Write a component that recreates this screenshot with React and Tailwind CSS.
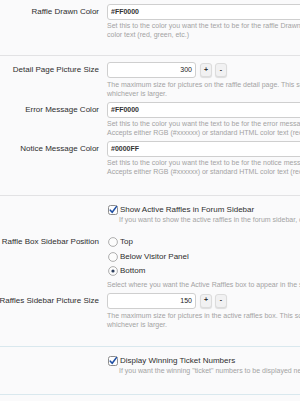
import React from 'react';

const FONT = "font-['Liberation_Sans',Arial,sans-serif]";

function Label({ children, className = '' }) {
  return (
    <div className={`w-[99px] shrink-0 flex justify-end whitespace-nowrap text-[8px] text-[#2e2e2e] ${className}`}>
      {children}
    </div>
  );
}

function Hint({ lines, className = 'mt-[1px]' }) {
  return (
    <div className={`text-[7px] leading-[9px] text-[#a3a3a3] whitespace-nowrap ${className}`}>
      {lines.map((l) => (
        <div key={l}>{l}</div>
      ))}
    </div>
  );
}

function TextRow({ label, value, hint, className = '' }) {
  return (
    <div className={`flex ${className}`}>
      <Label className="h-[16px] leading-[16px]">{label}</Label>
      <div className="ml-[8px] flex-1 min-w-0">
        <div className="h-[16px] w-[220px] rounded-[3px] border border-[#cfcfcf] bg-white pl-[3px] text-[7px] font-bold leading-[14px] text-[#333]">
          {value}
        </div>
        <Hint lines={hint} />
      </div>
    </div>
  );
}

function SpinRow({ label, value, hint, className = '' }) {
  return (
    <div className={`flex ${className}`}>
      <Label className="h-[16px] leading-[16px]">{label}</Label>
      <div className="ml-[8px] flex-1 min-w-0">
        <div className="flex items-center h-[16px]">
          <div className="h-[16px] w-[89px] rounded-[3px] border border-[#cfcfcf] bg-white pr-[3px] text-right text-[7px] leading-[14px] text-[#222]">
            {value}
          </div>
          <div className="ml-[4px] flex h-[14px] w-[12px] items-center justify-center rounded-[3px] border border-[#dcdcdc] bg-[#f1f1f2] text-[7px] font-bold text-[#333] shadow-[0_1px_1px_rgba(0,0,0,0.12)]">
            +
          </div>
          <div className="ml-[3px] flex h-[14px] w-[12px] items-center justify-center rounded-[3px] border border-[#dcdcdc] bg-[#f1f1f2] text-[7px] font-bold text-[#333] shadow-[0_1px_1px_rgba(0,0,0,0.12)]">
            -
          </div>
        </div>
        <Hint lines={hint} className="mt-[2px]" />
      </div>
    </div>
  );
}

function Checkbox() {
  return (
    <svg width="10" height="10" viewBox="0 0 10 10" className="shrink-0">
      <rect x="0.5" y="0.5" width="9" height="9" rx="2" fill="#fdfdfd" stroke="#8c8c8c" />
      <path d="M2.3 5.2 L4.2 7.3 L8.4 1.6" fill="none" stroke="#1f4fa3" strokeWidth="1.6" strokeLinecap="round" strokeLinejoin="round" />
    </svg>
  );
}

function Radio({ checked }) {
  return (
    <svg width="10" height="10" viewBox="0 0 10 10" className="shrink-0">
      <circle cx="5" cy="5" r="4.4" fill="#fcfcfc" stroke="#9a9a9a" strokeWidth="0.8" />
      {checked && <circle cx="5" cy="5" r="1.6" fill="#2d3f5e" />}
    </svg>
  );
}

function CheckRow({ text, hint, className = '' }) {
  return (
    <div className={`flex ${className}`}>
      <div className="w-[99px] shrink-0" />
      <div className="ml-[8px] flex-1 min-w-0">
        <div className="flex items-center h-[10px] gap-[2px] pl-[1px] whitespace-nowrap text-[8px] text-[#2e2e2e]">
          <Checkbox />
          <span>{text}</span>
        </div>
        <Hint lines={[hint]} className="ml-[12px]" />
      </div>
    </div>
  );
}

export default function App() {
  const radios = [
    { label: 'Top', checked: false },
    { label: 'Below Visitor Panel', checked: false },
    { label: 'Bottom', checked: true },
  ];

  return (
    <div className={`w-[300px] h-[401px] overflow-hidden bg-[#fafafb] ${FONT}`}>
      <div className="pt-[4px] pb-[16px] border-b border-[#e2e2e4]">
        <TextRow
          label="Raffle Drawn Color"
          value="#FF0000"
          hint={[
            'Set this to the color you want the text to be for the raffle Drawn',
            'color text (red, green, etc.)',
          ]}
        />
      </div>

      <div className="pt-[6px] pb-[19px] border-b border-[#e2e2e4]">
        <SpinRow
          label="Detail Page Picture Size"
          value="300"
          hint={[
            'The maximum size for pictures on the raffle detail page. This scale',
            'whichever is larger.',
          ]}
        />
        <TextRow
          className="mt-[4px]"
          label="Error Message Color"
          value="#FF0000"
          hint={[
            'Set this to the color you want the text to be for the error message',
            'Accepts either RGB (#xxxxxx) or standard HTML color text (red, green',
          ]}
        />
        <TextRow
          className="mt-[4px]"
          label="Notice Message Color"
          value="#0000FF"
          hint={[
            'Set this to the color you want the text to be for the notice message',
            'Accepts either RGB (#xxxxxx) or standard HTML color text (red, green',
          ]}
        />
      </div>

      <div className="pt-[9px] pb-[17px] border-b border-[#d9e8ee]">
        <CheckRow
          text="Show Active Raffles in Forum Sidebar"
          hint="If you want to show the active raffles in the forum sidebar, check this"
        />

        <div className="flex mt-[11px]">
          <Label className="h-[14.5px] leading-[14.5px]">Active Raffle Box Sidebar Position</Label>
          <div className="ml-[8px] flex-1 min-w-0">
            {radios.map((r) => (
              <div key={r.label} className="flex items-center h-[14.5px] gap-[2px] pl-[1px] whitespace-nowrap text-[8px] text-[#2e2e2e]">
                <Radio checked={r.checked} />
                <span>{r.label}</span>
              </div>
            ))}
            <Hint lines={['Select where you want the Active Raffles box to appear in the sidebar.']} className="mt-[1px]" />
          </div>
        </div>

        <SpinRow
          className="mt-[4px]"
          label="Active Raffles Sidebar Picture Size"
          value="150"
          hint={[
            'The maximum size for pictures in the active raffles box. This scale',
            'whichever is larger.',
          ]}
        />
      </div>

      <div className="pt-[9px] pb-[19px] border-b border-[#d9e8ee]">
        <CheckRow
          text="Display Winning Ticket Numbers"
          hint='If you want the winning "ticket" numbers to be displayed next to'
        />
      </div>
    </div>
  );
}
